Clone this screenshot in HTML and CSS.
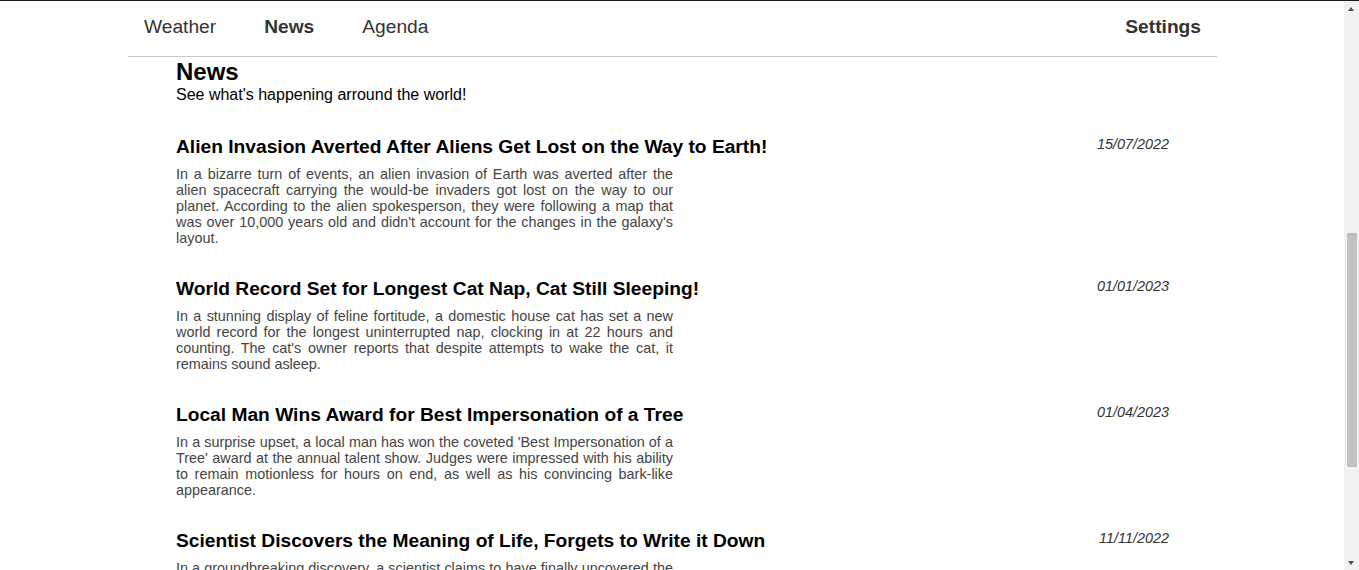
FILE: index.html
```html
<!DOCTYPE html>
<html lang="en">
<head>
<meta charset="utf-8">
<title>News</title>
<link rel="stylesheet" href="styles.css">
</head>
<body>
<div class="page">
  <nav class="topnav">
    <div class="nav-links">
      <a class="nav-link" href="#">Weather</a>
      <a class="nav-link active" href="#">News</a>
      <a class="nav-link" href="#">Agenda</a>
    </div>
    <a class="nav-link active" href="#">Settings</a>
  </nav>
  <main class="content">
    <header class="page-header">
      <h1 class="page-title">News</h1>
      <p class="page-subtitle">See what's happening arround the world!</p>
    </header>

    <article class="article">
      <div class="article-body">
        <h2 class="article-title">Alien Invasion Averted After Aliens Get Lost on the Way to Earth!</h2>
        <p class="article-text">In a bizarre turn of events, an alien invasion of Earth was averted after the alien spacecraft carrying the would-be invaders got lost on the way to our planet. According to the alien spokesperson, they were following a map that was over 10,000 years old and didn't account for the changes in the galaxy's layout.</p>
      </div>
      <time class="article-date">15/07/2022</time>
    </article>

    <article class="article">
      <div class="article-body">
        <h2 class="article-title">World Record Set for Longest Cat Nap, Cat Still Sleeping!</h2>
        <p class="article-text">In a stunning display of feline fortitude, a domestic house cat has set a new world record for the longest uninterrupted nap, clocking in at 22 hours and counting. The cat's owner reports that despite attempts to wake the cat, it remains sound asleep.</p>
      </div>
      <time class="article-date">01/01/2023</time>
    </article>

    <article class="article">
      <div class="article-body">
        <h2 class="article-title">Local Man Wins Award for Best Impersonation of a Tree</h2>
        <p class="article-text">In a surprise upset, a local man has won the coveted 'Best Impersonation of a Tree' award at the annual talent show. Judges were impressed with his ability to remain motionless for hours on end, as well as his convincing bark-like appearance.</p>
      </div>
      <time class="article-date">01/04/2023</time>
    </article>

    <article class="article">
      <div class="article-body">
        <h2 class="article-title">Scientist Discovers the Meaning of Life, Forgets to Write it Down</h2>
        <p class="article-text">In a groundbreaking discovery, a scientist claims to have finally uncovered the meaning of life. Unfortunately, in all the excitement, he forgot to write it down and now cannot remember a single word of it.</p>
      </div>
      <time class="article-date">11/11/2022</time>
    </article>
  </main>
</div>
<div class="scrollbar" aria-hidden="true">
  <span class="scroll-arrow up"></span>
  <span class="scroll-thumb"></span>
  <span class="scroll-arrow down"></span>
</div>
</body>
</html>
```

FILE: styles.css
```css
html, body {
  margin: 0;
  padding: 0;
  background: #ffffff;
}

body {
  font-family: "Liberation Sans", Arial, sans-serif;
  color: #000000;
  border-top: 1px solid #1c1c1c;
}

.page {
  margin-right: 14px;
}

.topnav {
  width: 1089px;
  margin: 0 auto;
  box-sizing: border-box;
  display: flex;
  justify-content: space-between;
  align-items: flex-start;
  padding: 15px 0 18px;
  border-bottom: 1px solid #c8c8c8;
}

.nav-links {
  display: flex;
  gap: 16px;
}

.nav-link {
  display: block;
  padding: 0 16px;
  font-size: 19.2px;
  color: #333333;
  text-decoration: none;
}

.nav-link.active {
  font-weight: bold;
}

.content {
  width: 1089px;
  margin: 0 auto;
  box-sizing: border-box;
  padding: 0 48px 40px;
}

.page-header {
  padding-top: 1px;
}

.page-title {
  margin: 0;
  font-size: 24px;
  font-weight: bold;
}

.page-subtitle {
  margin: 0;
  font-size: 16px;
}

.article {
  display: flex;
  justify-content: space-between;
  align-items: flex-start;
  padding-top: 32px;
}

.article-title {
  margin: 0 0 8px;
  font-size: 19.2px;
  font-weight: bold;
  color: #000000;
}

.article-text {
  margin: 0;
  max-width: 497px;
  font-size: 14.4px;
  line-height: 16px;
  color: #444444;
  text-align: justify;
}

.article-date {
  font-size: 14.4px;
  font-style: italic;
  color: #333333;
}

/* imitation of the browser's vertical scrollbar, drawn over the right edge */
.scrollbar {
  position: fixed;
  top: 1px;
  right: 0;
  bottom: 0;
  width: 15px;
  background: #f1f1f1;
}

.scroll-thumb {
  position: absolute;
  top: 232px;
  left: 3px;
  width: 10px;
  height: 234px;
  background: #c1c1c1;
}

.scroll-arrow {
  position: absolute;
  left: 4px;
  width: 0;
  height: 0;
  border-left: 3.5px solid transparent;
  border-right: 3.5px solid transparent;
}

.scroll-arrow.up {
  top: 6px;
  border-bottom: 4px solid #505050;
}

.scroll-arrow.down {
  bottom: 5px;
  border-top: 4px solid #505050;
}
```
